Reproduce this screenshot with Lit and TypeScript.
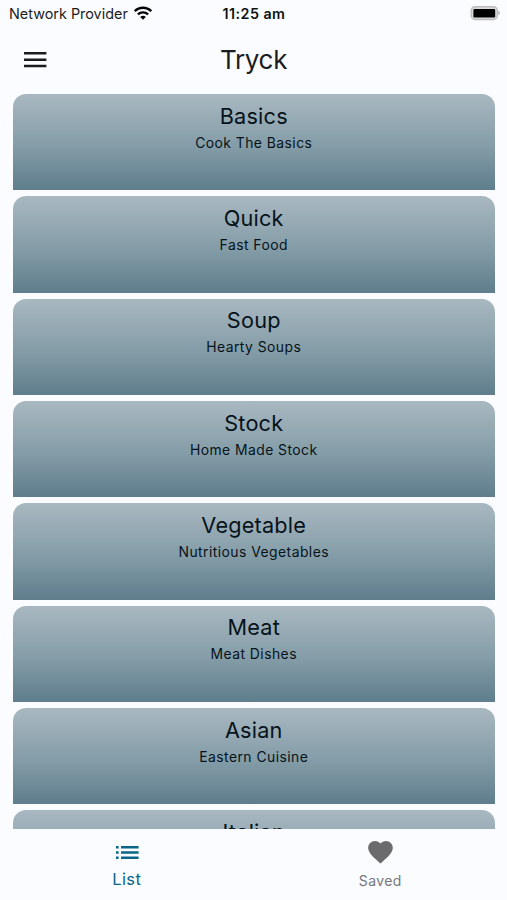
import { LitElement, html, css, nothing } from "lit";
import { customElement, property } from "lit/decorators.js";

interface Category {
  title: string;
  subtitle?: string;
}

const CATEGORIES: Category[] = [
  { title: "Basics", subtitle: "Cook The Basics" },
  { title: "Quick", subtitle: "Fast Food" },
  { title: "Soup", subtitle: "Hearty Soups" },
  { title: "Stock", subtitle: "Home Made Stock" },
  { title: "Vegetable", subtitle: "Nutritious Vegetables" },
  { title: "Meat", subtitle: "Meat Dishes" },
  { title: "Asian", subtitle: "Eastern Cuisine" },
  { title: "Italian" },
];

@customElement("status-bar")
class StatusBar extends LitElement {
  static styles = css`
    :host {
      display: grid;
      grid-template-columns: 1fr auto 1fr;
      align-items: center;
      height: 28px;
      padding: 0 6px 0 9px;
      box-sizing: border-box;
      font: 14.4px/28px Inter, sans-serif;
      color: #1b1c1e;
    }
    .carrier { display: flex; align-items: center; gap: 6px; white-space: nowrap; }
    .time { font-weight: 600; font-size: 14.3px; letter-spacing: 0.45px; color: #111; padding-right: 2px; }
    .battery { justify-self: end; display: block; margin-top: -2px; }
    svg { display: block; }
    .wifi { margin-top: -2px; }
  `;
  render() {
    return html`
      <div class="carrier">
        <span>Network Provider</span>
        <svg class="wifi" width="18" height="14" viewBox="0 0 18 14" fill="none" stroke="#050505" stroke-width="2.3">
          <path d="M.8 5.2C5.3.6 12.7.6 17.2 5.2" />
          <path d="M3.9 8.4c2.8-2.8 7.4-2.8 10.2 0" />
          <path d="M9 13.7 6.2 10.9c1.6-1.5 4-1.5 5.6 0z" fill="#050505" stroke="none" />
        </svg>
      </div>
      <div class="time">11:25 am</div>
      <svg class="battery" width="31" height="16" viewBox="0 0 31 16">
        <rect x="1.2" y="1.7" width="26.2" height="12.8" rx="4" fill="#dcdcdd" stroke="#bcbcbd" stroke-width="1.4" />
        <rect x="3.4" y="3.9" width="21.8" height="8.6" rx="1.2" fill="#000" />
        <path d="M28.4 6c2 .8 2 3.3 0 4.1z" fill="#a9a9aa" />
      </svg>
    `;
  }
}

@customElement("category-card")
class CategoryCard extends LitElement {
  @property() title = "";
  @property() subtitle?: string;
  static styles = css`
    :host {
      display: block;
      flex: none;
      height: 96.35px;
      box-sizing: border-box;
      padding-top: 7.6px;
      border-radius: 13px 13px 0 0;
      background: linear-gradient(#a9b8c1, #839ca7 55%, #5f7d8c);
      text-align: center;
      color: #06131b;
      font-family: Inter, sans-serif;
    }
    .title { font-size: 21.7px; line-height: 28px; letter-spacing: 0.2px; }
    .subtitle { font-size: 13.9px; line-height: 20px; margin-top: 3px; letter-spacing: 0.45px; }
  `;
  render() {
    return html`<div class="title">${this.title}</div>
      ${this.subtitle ? html`<div class="subtitle">${this.subtitle}</div>` : nothing}`;
  }
}

@customElement("app-root")
class AppRoot extends LitElement {
  static styles = css`
    :host {
      display: flex;
      flex-direction: column;
      height: 900px;
      overflow: hidden;
      background: #fbfcff;
      font-family: Inter, sans-serif;
    }
    svg { display: block; }
    .header {
      display: grid;
      grid-template-columns: 1fr auto 1fr;
      align-items: center;
      height: 66px;
      flex: none;
      padding: 0 24px;
      color: #1b1c1f;
    }
    .heading { font-size: 26px; line-height: 36px; letter-spacing: -0.3px; margin-top: -2px; }
    .menu { margin-top: -2px; }
    .list {
      flex: 1;
      min-height: 0;
      overflow: hidden;
      display: flex;
      flex-direction: column;
      gap: 6px;
      padding: 0 12.5px 0 13px;
    }
    .tabs { flex: none; display: flex; height: 71px; }
    .tab {
      flex: 1;
      display: flex;
      flex-direction: column;
      align-items: center;
      color: #75777b;
      font-size: 14px;
      letter-spacing: 0.4px;
    }
    .tab.active { color: #0b6587; font-size: 16.5px; }
    .icon { height: 41px; display: flex; align-items: flex-end; }
    .active .icon { padding-left: 2px; }
    .label { line-height: 20px; margin-top: 1px; }
    .active .label { margin-top: -1px; }
  `;
  render() {
    return html`
      <status-bar></status-bar>
      <div class="header">
        <svg class="menu" width="23" height="16" viewBox="0 0 23 16" fill="#1b1b1f">
          <path d="M0 0h22.4v2.6H0zM0 6.4h22.4V9H0zM0 12.7h22.4v2.6H0z" />
        </svg>
        <div class="heading">Tryck</div>
      </div>
      <div class="list">
        ${CATEGORIES.map(
          (c) => html`<category-card .title=${c.title} .subtitle=${c.subtitle}></category-card>`
        )}
      </div>
      <div class="tabs">
        <div class="tab active">
          <div class="icon">
            <svg width="23" height="24" viewBox="0 0 23 24" fill="currentColor">
              <path d="M0 0h2.6v2.6H0zM0 5.2h2.6v2.6H0zM0 10.4h2.6V13H0zM5 0h17.6v2.6H5zM5 5.2h17.6v2.6H5zM5 10.4h17.6V13H5z" />
            </svg>
          </div>
          <div class="label">List</div>
        </div>
        <div class="tab">
          <div class="icon">
            <svg width="25" height="29" viewBox="0 0 25 29" fill="#6b6b6d">
              <path transform="scale(1.23) translate(-1.85 -3)" d="M12 21.35l-1.45-1.32C5.4 15.36 2 12.28 2 8.5 2 5.42 4.42 3 7.5 3c1.74 0 3.41.81 4.5 2.09C13.09 3.81 14.76 3 16.5 3 19.58 3 22 5.42 22 8.5c0 3.78-3.4 6.86-8.55 11.54L12 21.35z" />
            </svg>
          </div>
          <div class="label">Saved</div>
        </div>
      </div>
    `;
  }
}
